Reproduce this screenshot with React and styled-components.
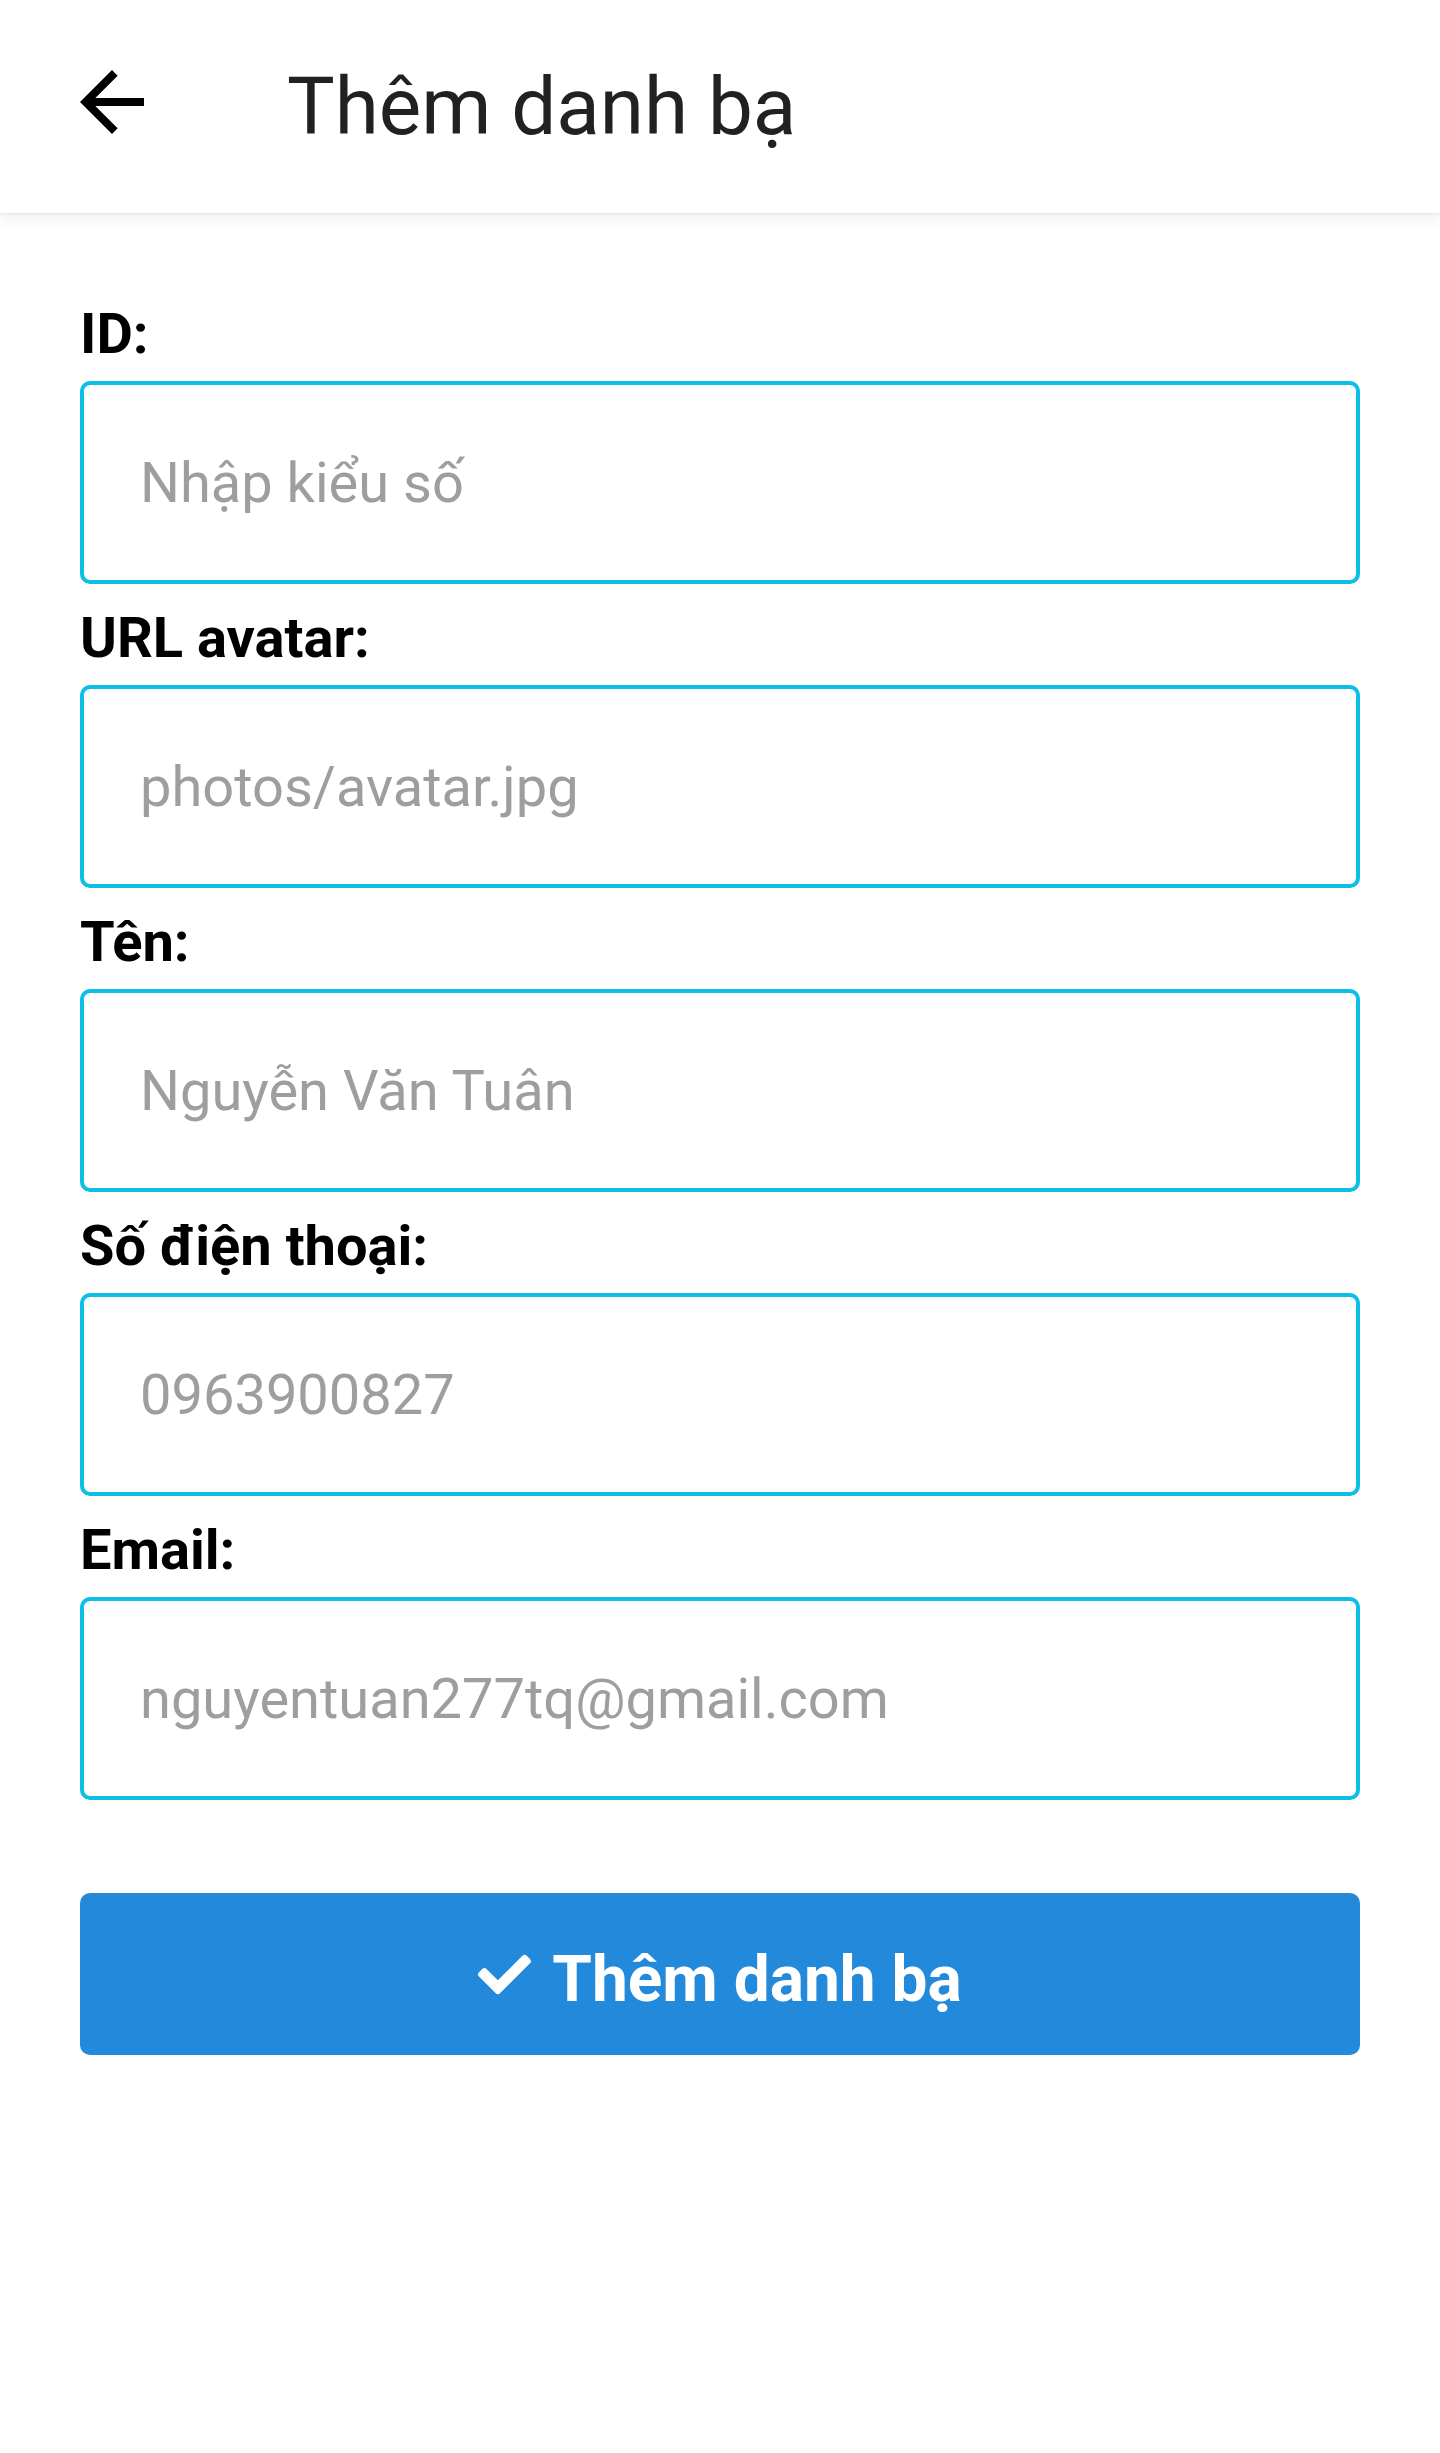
import styled, { createGlobalStyle } from "styled-components";
import { FaCheck } from "react-icons/fa";

/* ================= STYLES ================= */
const GlobalStyle = createGlobalStyle`
  html, body { margin: 0; padding: 0; background: #fff; }
  body { font-family: Roboto, "Noto Sans", "Liberation Sans", sans-serif; }
  * { box-sizing: border-box; }
`;

const Screen = styled.div`
  width: 1440px;
  min-height: 2453px;
  background: #fff;
`;

const AppBar = styled.header`
  height: 213px;
  display: flex;
  align-items: center;
  padding-left: 64px;
  background: #fff;
  box-shadow: 0 4px 16px rgba(0, 0, 0, 0.08), 0 1px 2px rgba(0, 0, 0, 0.06);
  position: relative;
  z-index: 1;
`;

const BackButton = styled.button`
  width: 96px;
  height: 96px;
  padding: 0;
  margin-bottom: 10px;
  border: none;
  background: transparent;
  display: flex;
  align-items: center;
  justify-content: center;
  cursor: pointer;
  svg { width: 96px; height: 96px; display: block; }
`;

const Title = styled.h1`
  margin: 0 0 0 127px;
  font-size: 80px;
  font-weight: 400;
  color: #212121;
  line-height: 1;
`;

const Form = styled.form`
  display: flex;
  flex-direction: column;
  padding: 88px 80px 0 80px;
`;

const Field = styled.div`
  display: flex;
  flex-direction: column;
  margin-bottom: 21px;
  &:last-of-type { margin-bottom: 0; }
`;

const Label = styled.label`
  font-size: 56px;
  font-weight: 700;
  line-height: 66px;
  color: #000;
  margin-bottom: 14px;
`;

const Input = styled.input`
  width: 100%;
  height: 203px;
  border: 4px solid #0cbfe3;
  border-radius: 10px;
  padding: 0 0 0 56px;
  font-family: Roboto, "Noto Sans", "Liberation Sans", sans-serif;
  font-size: 56px;
  color: #212121;
  background: #fff;
  outline: none;
  &::placeholder { color: #9e9e9e; }
`;

const SubmitButton = styled.button`
  margin-top: 93px;
  height: 162px;
  width: 100%;
  border: none;
  border-radius: 10px;
  background: #2389db;
  color: #fff;
  display: flex;
  align-items: center;
  justify-content: center;
  gap: 21px;
  font-family: Roboto, "Noto Sans", "Liberation Sans", sans-serif;
  font-size: 64px;
  font-weight: 700;
  cursor: pointer;
  svg { width: 53px; height: 53px; }
`;

const ButtonText = styled.span`
  padding-top: 10px;
`;

/* ================= COMPONENT ================= */
const fields = [
  { id: "id", label: "ID:", placeholder: "Nhập kiểu số" },
  { id: "avatar", label: "URL avatar:", placeholder: "photos/avatar.jpg" },
  { id: "name", label: "Tên:", placeholder: "Nguyễn Văn Tuân" },
  { id: "phone", label: "Số điện thoại:", placeholder: "0963900827" },
  { id: "email", label: "Email:", placeholder: "nguyentuan277tq@gmail.com" },
];

export default function App() {
  return (
    <Screen>
      <GlobalStyle />
      <AppBar>
        <BackButton type="button" aria-label="Quay lại">
          <svg viewBox="0 0 24 24" fill="#000">
            <path d="M20 11H7.83l5.59-5.59L12 4l-8 8 8 8 1.41-1.41L7.83 13H20v-2z" />
          </svg>
        </BackButton>
        <Title>Thêm danh bạ</Title>
      </AppBar>

      <Form onSubmit={e => e.preventDefault()}>
        {fields.map(f => (
          <Field key={f.id}>
            <Label htmlFor={f.id}>{f.label}</Label>
            <Input id={f.id} placeholder={f.placeholder} />
          </Field>
        ))}
        <SubmitButton type="submit">
          <FaCheck />
          <ButtonText>Thêm danh bạ</ButtonText>
        </SubmitButton>
      </Form>
    </Screen>
  );
}
